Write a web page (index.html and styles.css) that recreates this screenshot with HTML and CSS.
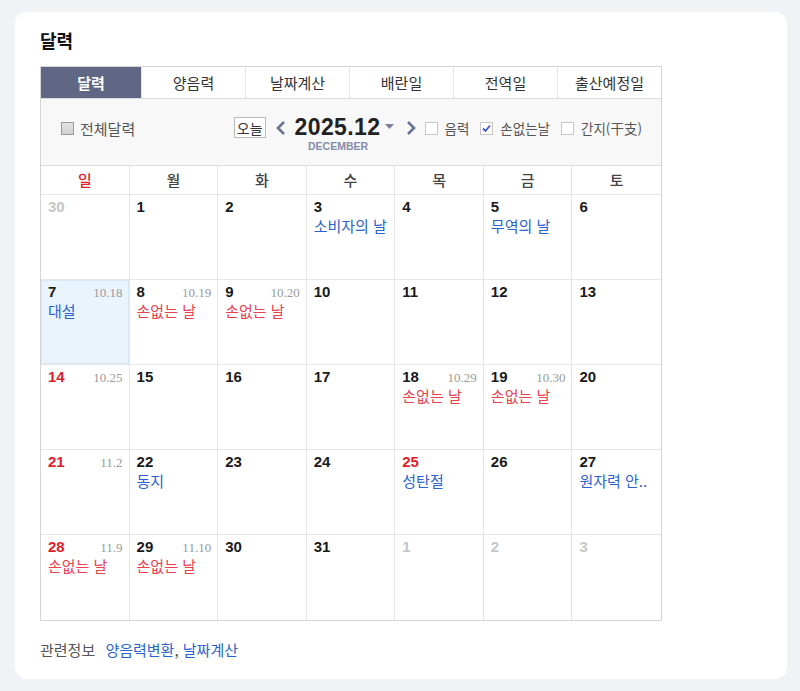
FILE: index.html
```html
<!DOCTYPE html>
<html lang="ko">
<head>
  <meta charset="UTF-8" />
  <meta name="viewport" content="width=device-width, initial-scale=1.0" />
  <title>달력</title>
  <link rel="stylesheet" href="styles.css">
</head>
<body>
  <div class="card">
    <h2 class="card-title">달력</h2>

    <div class="calendar">
      <ul class="tabs">
        <li class="tab active">달력</li>
        <li class="tab">양음력</li>
        <li class="tab">날짜계산</li>
        <li class="tab">배란일</li>
        <li class="tab">전역일</li>
        <li class="tab">출산예정일</li>
      </ul>

      <div class="controls">
        <label class="option all">
          <span class="box box-grey"></span>전체달력
        </label>

        <div class="right-group">
          <button class="today-btn">오늘</button>
          <svg class="chevron" width="10" height="16" viewBox="0 0 10 16">
            <polyline points="8,2 2,8 8,14" fill="none" stroke="#6b7394" stroke-width="2.6" />
          </svg>
          <div class="month">
            <div class="month-num">2025.12<svg class="caret" width="9" height="5" viewBox="0 0 9 5"><polygon points="0,0 9,0 4.5,5" fill="#7a8099" /></svg></div>
            <div class="month-en">DECEMBER</div>
          </div>
          <svg class="chevron" width="10" height="16" viewBox="0 0 10 16">
            <polyline points="2,2 8,8 2,14" fill="none" stroke="#6b7394" stroke-width="2.6" />
          </svg>

          <label class="option first"><span class="box"></span>음력</label>
          <label class="option">
            <span class="box">
              <svg width="11" height="11" viewBox="0 0 11 11"><polyline points="2,5.5 4.5,8 9,2.5" fill="none" stroke="#3a5bd0" stroke-width="1.8" /></svg>
            </span>손없는날
          </label>
          <label class="option"><span class="box"></span>간지(干支)</label>
        </div>
      </div>

      <div class="grid">
        <div class="wk sun">일</div>
        <div class="wk">월</div>
        <div class="wk">화</div>
        <div class="wk">수</div>
        <div class="wk">목</div>
        <div class="wk">금</div>
        <div class="wk">토</div>

        <div class="day other"><div class="top"><span class="num">30</span></div></div>
        <div class="day"><div class="top"><span class="num">1</span></div></div>
        <div class="day"><div class="top"><span class="num">2</span></div></div>
        <div class="day"><div class="top"><span class="num">3</span></div><div class="ev blue">소비자의 날</div></div>
        <div class="day"><div class="top"><span class="num">4</span></div></div>
        <div class="day"><div class="top"><span class="num">5</span></div><div class="ev blue">무역의 날</div></div>
        <div class="day"><div class="top"><span class="num">6</span></div></div>

        <div class="day today"><div class="top"><span class="num">7</span><span class="lunar">10.18</span></div><div class="ev blue">대설</div></div>
        <div class="day"><div class="top"><span class="num">8</span><span class="lunar">10.19</span></div><div class="ev red">손없는 날</div></div>
        <div class="day"><div class="top"><span class="num">9</span><span class="lunar">10.20</span></div><div class="ev red">손없는 날</div></div>
        <div class="day"><div class="top"><span class="num">10</span></div></div>
        <div class="day"><div class="top"><span class="num">11</span></div></div>
        <div class="day"><div class="top"><span class="num">12</span></div></div>
        <div class="day"><div class="top"><span class="num">13</span></div></div>

        <div class="day sun"><div class="top"><span class="num">14</span><span class="lunar">10.25</span></div></div>
        <div class="day"><div class="top"><span class="num">15</span></div></div>
        <div class="day"><div class="top"><span class="num">16</span></div></div>
        <div class="day"><div class="top"><span class="num">17</span></div></div>
        <div class="day"><div class="top"><span class="num">18</span><span class="lunar">10.29</span></div><div class="ev red">손없는 날</div></div>
        <div class="day"><div class="top"><span class="num">19</span><span class="lunar">10.30</span></div><div class="ev red">손없는 날</div></div>
        <div class="day"><div class="top"><span class="num">20</span></div></div>

        <div class="day sun"><div class="top"><span class="num">21</span><span class="lunar">11.2</span></div></div>
        <div class="day"><div class="top"><span class="num">22</span></div><div class="ev blue">동지</div></div>
        <div class="day"><div class="top"><span class="num">23</span></div></div>
        <div class="day"><div class="top"><span class="num">24</span></div></div>
        <div class="day holiday"><div class="top"><span class="num">25</span></div><div class="ev blue">성탄절</div></div>
        <div class="day"><div class="top"><span class="num">26</span></div></div>
        <div class="day"><div class="top"><span class="num">27</span></div><div class="ev blue">원자력 안..</div></div>

        <div class="day sun last"><div class="top"><span class="num">28</span><span class="lunar">11.9</span></div><div class="ev red">손없는 날</div></div>
        <div class="day last"><div class="top"><span class="num">29</span><span class="lunar">11.10</span></div><div class="ev red">손없는 날</div></div>
        <div class="day last"><div class="top"><span class="num">30</span></div></div>
        <div class="day last"><div class="top"><span class="num">31</span></div></div>
        <div class="day other last"><div class="top"><span class="num">1</span></div></div>
        <div class="day other last"><div class="top"><span class="num">2</span></div></div>
        <div class="day other last"><div class="top"><span class="num">3</span></div></div>
      </div>
    </div>

    <p class="related">관련정보 <a href="#">양음력변환</a>, <a href="#">날짜계산</a></p>
  </div>
</body>
</html>
```

FILE: styles.css
```css
body {
  margin: 0;
  padding: 12px 13px 12px 15px;
  background-color: #f1f2f6;
  font-family: "Noto Sans CJK KR", "Noto Sans", sans-serif;
  color: #222;
}

.card {
  background-color: #fff;
  border-radius: 12px;
  padding: 15px 25px 16px;
  height: 667px;
  box-sizing: border-box;
}

.card-title {
  margin: 0 0 13px;
  font-size: 18px;
  line-height: 26px;
  font-weight: bold;
  color: #111;
}

.calendar {
  width: 622px;
  border: 1px solid #d5d5d5;
  box-sizing: border-box;
}

/* 탭 */
.tabs {
  display: grid;
  grid-template-columns: 100px repeat(5, 1fr);
  margin: 0;
  padding: 0;
  list-style: none;
  border-bottom: 1px solid #dcdcdc;
}

.tab {
  height: 31px;
  line-height: 31px;
  text-align: center;
  font-size: 15px;
  color: #333;
  border-left: 1px solid #e4e4e4;
}

.tab:first-child {
  border-left: none;
}

.tab.active {
  background-color: #5f6785;
  color: #fff;
  font-weight: bold;
}

/* 상단 컨트롤 */
.controls {
  display: flex;
  justify-content: space-between;
  align-items: flex-start;
  height: 67px;
  padding: 18px 19px 0 20px;
  background-color: #f8f8f8;
  border-bottom: 1px solid #dcdcdc;
  box-sizing: border-box;
}

.option {
  display: flex;
  align-items: center;
  font-size: 13.5px;
  color: #555;
  height: 20px;
  margin-left: 11px;
}

.option.first {
  margin-left: 9px;
}

.option.all {
  margin-left: 0;
  margin-top: 1px;
  font-size: 15px;
}

.box {
  display: inline-flex;
  align-items: center;
  justify-content: center;
  width: 11px;
  height: 11px;
  border: 1px solid #c8c8c8;
  background-color: #fff;
  margin-right: 7px;
}

.box-grey {
  background: linear-gradient(#e4e4e4, #d0d0d0);
  border-color: #9a9a9a;
  margin-right: 6px;
}

.right-group {
  display: flex;
  align-items: flex-start;
}

.right-group .option {
  margin-top: 1px;
}

.today-btn {
  height: 21px;
  padding: 0 2px;
  margin: 0 10px 0 0;
  border: 1px solid #b9b9b9;
  background-color: #fff;
  font-family: inherit;
  font-size: 14px;
  line-height: 18px;
  color: #333;
}

.chevron {
  margin-top: 3px;
}

.month {
  margin: -4px 12px 0 9px;
  text-align: center;
}

.month-num {
  display: flex;
  align-items: center;
  font-family: "Liberation Sans", Arial, sans-serif;
  font-size: 23px;
  font-weight: bold;
  line-height: 28px;
  letter-spacing: 0.4px;
  color: #222;
}

.caret {
  margin-left: 4px;
  margin-top: -2px;
}

.month-en {
  font-family: "Liberation Sans", Arial, sans-serif;
  font-size: 10.5px;
  font-weight: bold;
  color: #848cab;
  margin-top: -1px;
  padding-right: 12px;
}

/* 달력 그리드 */
.grid {
  display: grid;
  grid-template-columns: repeat(7, 1fr);
  grid-template-rows: 29px repeat(5, 85px);
}

.wk {
  text-align: center;
  line-height: 28px;
  font-size: 15px;
  font-weight: 500;
  color: #444;
  border-right: 1px solid #e6e6e6;
  border-bottom: 1px solid #e6e6e6;
}

.wk.sun {
  color: #e0202e;
}

.wk:nth-child(7),
.day:nth-child(7n) {
  border-right: none;
}

.day {
  border-right: 1px solid #e6e6e6;
  border-bottom: 1px solid #e6e6e6;
  padding: 3px 6px 0 7px;
  box-sizing: border-box;
  overflow: hidden;
}

.day.last {
  border-bottom: none;
}

.day.today {
  background-color: #eaf4fc;
  box-shadow: inset 0 0 0 1px #d8e8f5;
}

.top {
  display: flex;
  justify-content: space-between;
  align-items: baseline;
  height: 17px;
  line-height: 17px;
}

.num {
  font-family: "Liberation Sans", Arial, sans-serif;
  font-size: 15px;
  font-weight: bold;
  color: #1a1a1a;
}

.day.sun .num,
.day.holiday .num {
  color: #dc1e2d;
}

.day.other .num {
  color: #c6c6c6;
}

.lunar {
  font-family: "Liberation Serif", "Times New Roman", serif;
  font-size: 13px;
  color: #9a9a9a;
}

.ev {
  margin-top: 1px;
  font-size: 15px;
  line-height: 19px;
  white-space: nowrap;
}

.ev.blue {
  color: #2c63cc;
}

.ev.red {
  color: #e8414f;
}

/* 관련정보 */
.related {
  margin: 18px 0 0;
  font-size: 15px;
  color: #555;
}

.related a {
  color: #2a64c8;
  text-decoration: none;
  margin-left: 6px;
}

.related a + a {
  margin-left: 0;
}
```
